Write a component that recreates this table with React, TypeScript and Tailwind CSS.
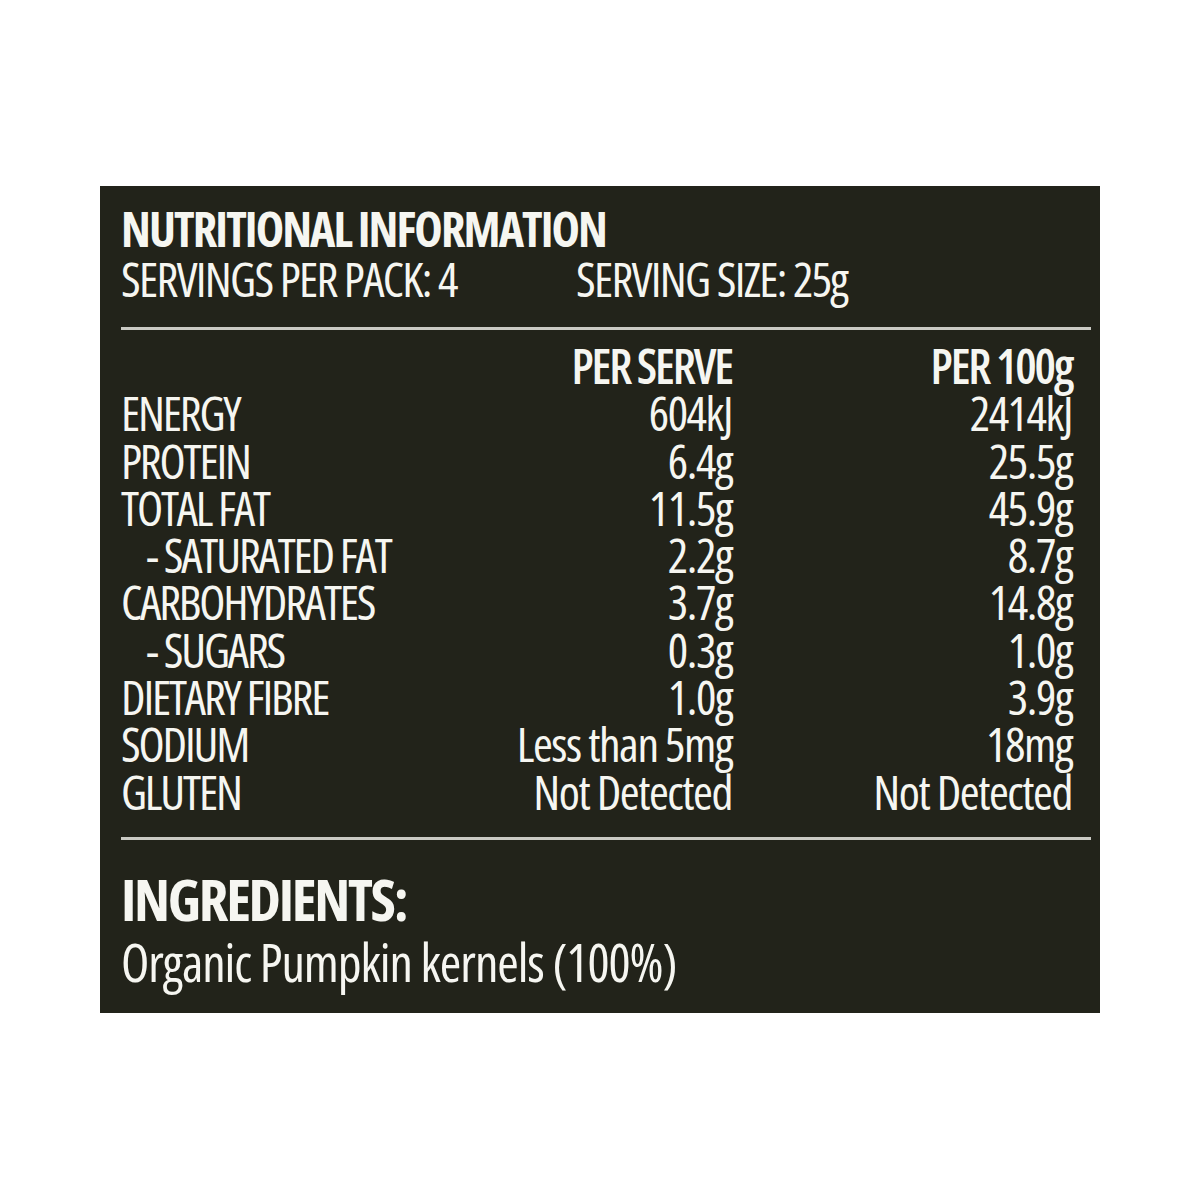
const rows: { label: string; serve: string; per100: string; sub?: boolean }[] = [
  { label: "ENERGY", serve: "604kJ", per100: "2414kJ" },
  { label: "PROTEIN", serve: "6.4g", per100: "25.5g" },
  { label: "TOTAL FAT", serve: "11.5g", per100: "45.9g" },
  { label: "- SATURATED FAT", serve: "2.2g", per100: "8.7g", sub: true },
  { label: "CARBOHYDRATES", serve: "3.7g", per100: "14.8g" },
  { label: "- SUGARS", serve: "0.3g", per100: "1.0g", sub: true },
  { label: "DIETARY FIBRE", serve: "1.0g", per100: "3.9g" },
  { label: "SODIUM", serve: "Less than 5mg", per100: "18mg" },
  { label: "GLUTEN", serve: "Not Detected", per100: "Not Detected" },
];

export default function App() {
  return (
    <div className="min-h-screen bg-white pt-[186px]">
      <div className="mx-auto h-[827px] w-[1000px] bg-[#22231a] pl-[21px] pr-[9px] pt-[19px] font-['Open_Sans'] text-[#f6f6f1] [font-stretch:75%]">
        <h1 className="whitespace-nowrap text-[48px] font-bold leading-[47px] tracking-[-0.04em]">NUTRITIONAL INFORMATION</h1>
        <div className="mt-[3px] grid grid-cols-[455px_1fr] whitespace-nowrap text-[48px] font-medium leading-[47px] tracking-[-0.035em]">
          <span>SERVINGS PER PACK: 4</span>
          <span>SERVING SIZE: 25g</span>
        </div>

        <div className="mt-[25px] h-[3px] bg-[#cacac4]" />

        <div className="mt-[12px] grid grid-cols-[minmax(0,1fr)_340px_340px] whitespace-nowrap pr-[19px] text-[48px] font-medium leading-[47.3px] tracking-[-0.045em]">
          <span />
          <span className="text-right font-semibold">PER SERVE</span>
          <span className="text-right font-semibold">PER 100g</span>
          {rows.map((r) => (
            <div key={r.label} className="contents">
              <span className={r.sub ? "pl-[25px]" : ""}>{r.label}</span>
              <span className="text-right tracking-[-0.03em]">{r.serve}</span>
              <span className="text-right tracking-[-0.03em]">{r.per100}</span>
            </div>
          ))}
        </div>

        <div className="mt-[22px] h-[3px] bg-[#cacac4]" />

        <h2 className="mt-[30px] whitespace-nowrap text-[58px] font-bold leading-[58px] tracking-[-0.04em]">INGREDIENTS:</h2>
        <p className="mt-[8px] whitespace-nowrap text-[52px] font-normal leading-[52px] tracking-[-0.02em]">Organic Pumpkin kernels (100%)</p>
      </div>
    </div>
  );
}
